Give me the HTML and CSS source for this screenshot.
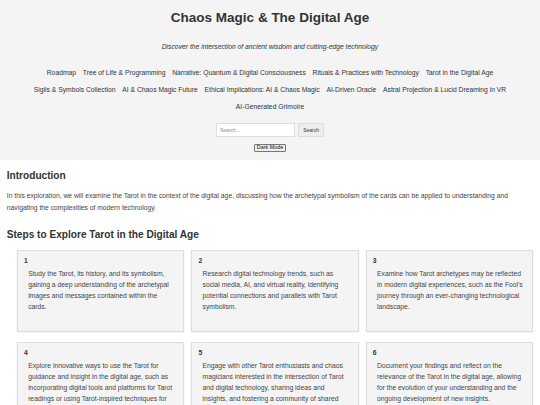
FILE: index.html
```html
<!DOCTYPE html>
<html lang="en">
<head>
<meta charset="utf-8">
<title>Chaos Magic &amp; The Digital Age</title>
<link rel="stylesheet" href="styles.css">
</head>
<body>
<header class="site-header">
  <h1 class="site-title">Chaos Magic &amp; The Digital Age</h1>
  <p class="tagline">Discover the intersection of ancient wisdom and cutting-edge technology</p>
  <nav class="nav">
    <a href="#">Roadmap</a>
    <a href="#">Tree of Life &amp; Programming</a>
    <a href="#">Narrative: Quantum &amp; Digital Consciousness</a>
    <a href="#">Rituals &amp; Practices with Technology</a>
    <a href="#">Tarot in the Digital Age</a>
    <a href="#">Sigils &amp; Symbols Collection</a>
    <a href="#">AI &amp; Chaos Magic Future</a>
    <a href="#">Ethical Implications: AI &amp; Chaos Magic</a>
    <a href="#">AI-Driven Oracle</a>
    <a href="#">Astral Projection &amp; Lucid Dreaming in VR</a>
    <a href="#">AI-Generated Grimoire</a>
  </nav>
  <form class="search" onsubmit="return false">
    <input class="search-input" type="text" placeholder="Search...">
    <button class="search-btn" type="submit">Search</button>
  </form>
  <button class="dark-toggle" type="button">Dark Mode</button>
</header>
<main class="content">
  <section class="intro">
    <h2 class="section-title">Introduction</h2>
    <p class="intro-text">In this exploration, we will examine the Tarot in the context of the digital age, discussing how the archetypal symbolism of the cards can be applied to understanding and navigating the complexities of modern technology.</p>
  </section>
  <section class="steps">
    <h2 class="section-title">Steps to Explore Tarot in the Digital Age</h2>
    <div class="step-grid">
      <div class="step-card">
        <div class="step-num">1</div>
        <p class="step-text">Study the Tarot, its history, and its symbolism, gaining a deep understanding of the archetypal images and messages contained within the cards.</p>
      </div>
      <div class="step-card">
        <div class="step-num">2</div>
        <p class="step-text">Research digital technology trends, such as social media, AI, and virtual reality, identifying potential connections and parallels with Tarot symbolism.</p>
      </div>
      <div class="step-card">
        <div class="step-num">3</div>
        <p class="step-text">Examine how Tarot archetypes may be reflected in modern digital experiences, such as the Fool's journey through an ever-changing technological landscape.</p>
      </div>
      <div class="step-card">
        <div class="step-num">4</div>
        <p class="step-text">Explore innovative ways to use the Tarot for guidance and insight in the digital age, such as incorporating digital tools and platforms for Tarot readings or using Tarot-inspired techniques for decision-making in a technologically driven world.</p>
      </div>
      <div class="step-card">
        <div class="step-num">5</div>
        <p class="step-text">Engage with other Tarot enthusiasts and chaos magicians interested in the intersection of Tarot and digital technology, sharing ideas and insights, and fostering a community of shared exploration.</p>
      </div>
      <div class="step-card">
        <div class="step-num">6</div>
        <p class="step-text">Document your findings and reflect on the relevance of the Tarot in the digital age, allowing for the evolution of your understanding and the ongoing development of new insights.</p>
      </div>
    </div>
  </section>
</main>
</body>
</html>
```
FILE: styles.css
```css
* { box-sizing: border-box; }

html, body {
  margin: 0;
  padding: 0;
  background: #ffffff;
  color: #333333;
  font-family: "Liberation Sans", Arial, sans-serif;
  font-size: 6.75px;
}

.site-header {
  background: #f4f4f4;
  text-align: center;
  padding: 9.5px 6.75px 6px;
  height: 160px;
  display: flex;
  flex-direction: column;
  align-items: center;
}

.site-title {
  margin: 0;
  font-size: 13.5px;
  line-height: 16px;
  font-weight: bold;
  color: #333333;
}

.tagline {
  margin: 16.2px 0 0;
  font-style: italic;
  font-size: 6.75px;
  line-height: 10px;
  color: #333333;
}

.nav {
  margin-top: 16.5px;
  display: flex;
  flex-wrap: wrap;
  justify-content: center;
  column-gap: 6.75px;
  row-gap: 7px;
  width: 100%;
}

.nav a {
  color: #333333;
  text-decoration: none;
  font-size: 6.75px;
  line-height: 10px;
}

.search {
  margin: 10.5px 0 0;
  display: flex;
  align-items: center;
  gap: 3.8px;
}

.search-input {
  width: 78.5px;
  height: 13.6px;
  margin: 0;
  padding: 0 3px;
  border: 0.5px solid #dddddd;
  background: #ffffff;
  font-family: "Liberation Sans", Arial, sans-serif;
  font-size: 5px;
  color: #333333;
  outline: none;
}

.search-input::placeholder { color: #8a8a8a; }

.search-btn {
  height: 14.7px;
  width: 25.7px;
  margin: 0;
  padding: 0;
  border: 0.5px solid #dddddd;
  background: #eeeeee;
  font-family: "Liberation Sans", Arial, sans-serif;
  font-size: 5px;
  color: #333333;
}

.dark-toggle {
  margin-top: 6.7px;
  height: 7.6px;
  padding: 0 2px;
  border: 0.8px solid #767676;
  border-radius: 1px;
  background: #efefef;
  font-family: "Liberation Sans", Arial, sans-serif;
  font-size: 5.4px;
  line-height: 5.6px;
  color: #111111;
}

.content {
  padding: 0 6.75px;
}

.section-title {
  margin: 9.7px 0 0;
  font-size: 10.125px;
  line-height: 12px;
  font-weight: bold;
  color: #333333;
}

.intro-text {
  margin: 8.3px 0 0;
  font-size: 6.75px;
  line-height: 12.15px;
  color: #444444;
}

.steps .section-title {
  margin-top: 14.6px;
}

.step-grid {
  margin: 9px 0 0 10.2px;
  display: grid;
  grid-template-columns: repeat(3, 1fr);
  column-gap: 7px;
  row-gap: 10px;
}

.step-card {
  background: #f4f4f4;
  border: 0.6px solid #dddddd;
  box-shadow: 0 0.5px 1.5px rgba(0, 0, 0, 0.12);
  padding: 6px;
}

.step-num {
  font-size: 6.75px;
  font-weight: bold;
  line-height: 8px;
  color: #333333;
}

.step-text {
  margin: 4px 1.8px 12.5px 4.2px;
  font-size: 6.75px;
  line-height: 10.9px;
  color: #444444;
}
```
